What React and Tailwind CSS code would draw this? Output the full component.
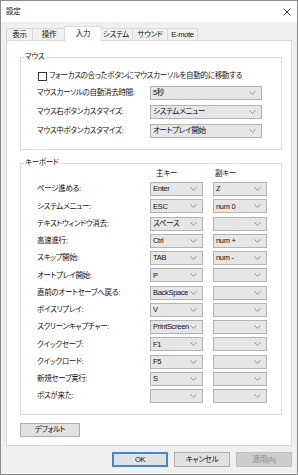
import React from 'react';

const font = "font-['Liberation_Sans','Noto_Sans_CJK_JP',sans-serif] [font-feature-settings:'palt'] tracking-[-0.3px]";

const Chevron = () => (
  <svg width="7" height="4" viewBox="0 0 7 4" fill="none" stroke="#8a8a8a" strokeWidth="0.9">
    <path d="M0.5 0.5L3.5 3.3L6.5 0.5" />
  </svg>
);

const Select = ({ value = '', width }) => (
  <div className={`flex h-[14px] items-center justify-between border border-[#b3b3b3] bg-[#e6e6e6] pl-[2px] pr-[5px] ${width}`}>
    <span className="leading-none">{value}</span>
    <Chevron />
  </div>
);

const tabs = [
  { name: '表示', w: 'w-[27px]' },
  { name: '操作', w: 'w-[33px]' },
  { name: '入力', w: 'w-[34px]', active: true },
  { name: 'システム', w: 'w-[33px]' },
  { name: 'サウンド', w: 'w-[35px]' },
  { name: 'E-mote', w: 'w-[30px]' },
];

const keys = [
  ['ページ進める:', 'Enter', 'Z'],
  ['システムメニュー:', 'ESC', 'num 0'],
  ['テキストウィンドウ消去:', 'スペース', ''],
  ['高速進行:', 'Ctrl', 'num +'],
  ['スキップ開始:', 'TAB', 'num -'],
  ['オートプレイ開始:', 'P', ''],
  ['直前のオートセーブへ戻る:', 'BackSpace', ''],
  ['ボイスリプレイ:', 'V', ''],
  ['スクリーンキャプチャー:', 'PrintScreen', ''],
  ['クイックセーブ:', 'F1', ''],
  ['クイックロード:', 'F5', ''],
  ['新規セーブ実行:', 'S', ''],
  ['ボスが来た:', '', ''],
];

const mouseRows = [
  ['マウスカーソルの自動消去時間:', '5秒'],
  ['マウス右ボタンカスタマイズ:', 'システムメニュー'],
  ['マウス中ボタンカスタマイズ:', 'オートプレイ開始'],
];

export default function App() {
  return (
    <div className={`flex h-[475px] w-[298px] flex-col border border-[#8c8c8c] bg-[#f0f0f0] text-[7.5px] text-[#111] ${font}`}>
      {/* title bar */}
      <div className="flex h-[21px] items-center justify-between bg-white pl-[5px] pr-[5px]">
        <span>設定</span>
        <svg width="8" height="8" viewBox="0 0 8 8" stroke="#222" strokeWidth="0.9" className="mr-[1px]">
          <path d="M0.5 0.5L7.5 7.5M7.5 0.5L0.5 7.5" />
        </svg>
      </div>

      {/* tabs */}
      <div className="relative z-10 flex h-[18px] items-end pl-[5px]">
        {tabs.map((t) =>
          t.active ? (
            <div
              key={t.name}
              className="-mx-[2px] -mb-px flex h-[15px] w-[38px] items-center justify-center border border-b-0 border-[#d9d9d9] bg-white pb-[1px]"
            >
              {t.name}
            </div>
          ) : (
            <div
              key={t.name}
              className={`flex h-[12px] items-center justify-center border border-b-0 border-l-0 border-[#d9d9d9] bg-[#f0f0f0] first:border-l ${t.w}`}
            >
              {t.name}
            </div>
          )
        )}
      </div>

      {/* panel */}
      <div className="mx-[5px] flex h-[406px] flex-col border border-[#d9d9d9] bg-white pl-[13px] pr-[9px] pt-[11px]">
        <fieldset className="w-[262px] border border-[#dcdcdc] px-[4px] pb-[11px]">
          <legend className="ml-[-1px] px-[1px] leading-[10px]">マウス</legend>
          <div className="pl-[12px]">
            <div className="mt-[8px] flex h-[12px] items-center gap-[2px] pl-[1px]">
              <span className="h-[9px] w-[9px] border border-[#333] bg-white" />
              <span>フォーカスの合ったボタンにマウスカーソルを自動的に移動する</span>
            </div>
            <div className="mt-[4px] flex flex-col gap-[5px]">
              {mouseRows.map(([label, val]) => (
                <div key={label} className="flex items-center">
                  <span className="w-[113px]">{label}</span>
                  <Select value={val} width="w-[112px]" />
                </div>
              ))}
            </div>
          </div>
        </fieldset>

        <fieldset className="mt-[8px] w-[262px] border border-[#dcdcdc] px-[4px] pb-[11px]">
          <legend className="ml-[-1px] px-[1px] leading-[10px]">キーボード</legend>
          <div className="pl-[12px]">
            <div className="flex h-[12px] items-center">
              <span className="w-[119px]" />
              <span className="w-[59px]">主キー</span>
              <span>副キー</span>
            </div>
            <div className="mt-[2px] flex flex-col gap-[3.25px]">
              {keys.map(([label, a, b]) => (
                <div key={label} className="flex items-center">
                  <span className="w-[113px]">{label}</span>
                  <Select value={a} width="w-[53px]" />
                  <div className="w-[10px]" />
                  <Select value={b} width="w-[54px]" />
                </div>
              ))}
            </div>
          </div>
        </fieldset>

        <button className="mt-[8px] h-[14px] w-[60px] border border-[#adadad] bg-[#e1e1e1] leading-none">
          デフォルト
        </button>
      </div>

      {/* footer buttons */}
      <div className="mt-[6px] flex justify-end gap-[6px] pr-[5px]">
        <button className="h-[15px] w-[56px] border-2 border-[#3c8ad6] bg-[#e1e1e1] leading-none">OK</button>
        <button className="h-[15px] w-[56px] border border-[#adadad] bg-[#e1e1e1] leading-none">キャンセル</button>
        <button className="h-[15px] w-[56px] border border-[#bfbfbf] bg-[#cccccc] leading-none text-[#8f8f8f]">適用(A)</button>
      </div>
    </div>
  );
}
